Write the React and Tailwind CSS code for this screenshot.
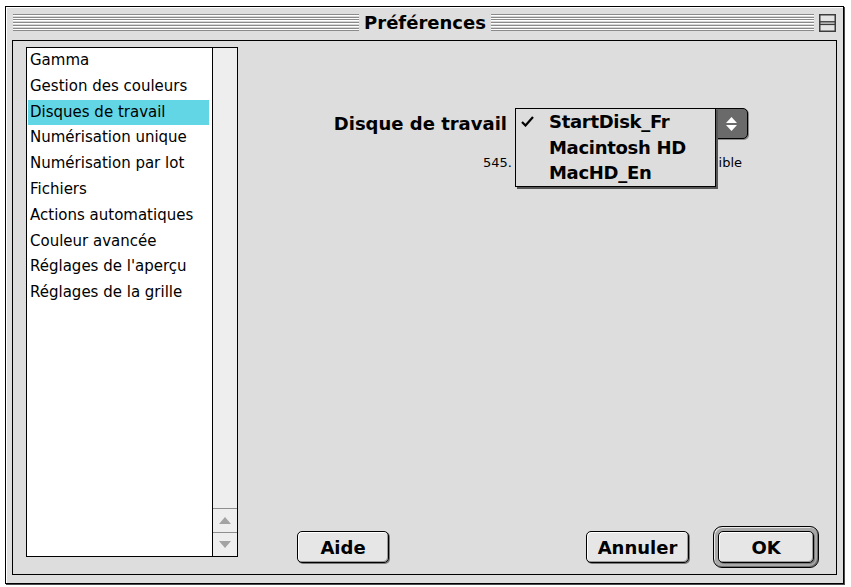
import React from 'react';

const items = [
    'Gamma',
    'Gestion des couleurs',
    'Disques de travail',
    'Numérisation unique',
    'Numérisation par lot',
    'Fichiers',
    'Actions automatiques',
    'Couleur avancée',
    "Réglages de l'aperçu",
    'Réglages de la grille',
];

const disks = ['StartDisk_Fr', 'Macintosh HD', 'MacHD_En'];

const stripes =
    'h-[17px] bg-[repeating-linear-gradient(180deg,#8a8a8a_0px,#8a8a8a_1px,#ffffff_1px,#ffffff_2px,#d6d6d6_2px,#d6d6d6_2.75px)]';

function PlatinumButton({ label, className = '' }) {
    return (
        <button
            type="button"
            className={`flex items-center justify-center rounded-[5px] border border-black bg-[#e6e6e6] text-[18px] font-bold text-black shadow-[inset_1px_1px_0_#ffffff,inset_-1px_-1px_0_#9a9a9a,1px_1px_0_#7a7a7a] ${className}`}
        >
            {label}
        </button>
    );
}

export default function App() {
    return (
        <div className="min-h-[587px] w-[851px] bg-white pl-[5px] pt-[6px] font-['DejaVu_Sans',sans-serif] text-black">
            <div className="flex h-[578px] w-[839px] flex-col border border-black bg-[#dedede] px-[6px] pb-[8px] shadow-[1px_1px_0_#4a4a4a,inset_1px_1px_0_#ffffff]">
                {/* title bar */}
                <div className="flex h-[33px] items-start pt-[7px]">
                    <div className={`ml-[1px] w-[346px] ${stripes}`} />
                    <div className="-mt-[2px] w-[132px] text-center text-[18px] font-bold leading-[22px]">Préférences</div>
                    <div className={`flex-1 ${stripes}`} />
                    <svg width="17" height="18" viewBox="0 0 17 18" className="ml-[5px] mr-[1px]">
                        <rect x="0.75" y="0.75" width="15.5" height="16.5" fill="#e4e4e4" stroke="#3c3c3c" strokeWidth="1.5" />
                        <line x1="1" y1="7.8" x2="16" y2="7.8" stroke="#3c3c3c" strokeWidth="1.4" />
                        <line x1="1" y1="10.4" x2="16" y2="10.4" stroke="#3c3c3c" strokeWidth="1.4" />
                    </svg>
                </div>

                {/* content */}
                <div className="flex flex-1 border border-black bg-[#dddddd] pl-[13px] pt-[6px]">
                    <div className="flex h-[510px] w-[212px] border border-black bg-white">
                        <div className="flex-1 pl-[1px] pr-[3px] text-[15px] leading-[25.8px]">
                            {items.map((item) => (
                                <div
                                    key={item}
                                    className={`h-[25.8px] whitespace-nowrap pl-[2px] ${item === 'Disques de travail' ? 'bg-[#63d6e6]' : ''}`}
                                >
                                    {item}
                                </div>
                            ))}
                        </div>
                        <div className="flex w-[25px] flex-col border-l border-black bg-[#eeeeee]">
                            <div className="flex-1" />
                            <div className="flex h-[24px] items-center justify-center border-t border-[#8f8f8f]">
                                <svg width="12" height="7" viewBox="0 0 12 7">
                                    <polygon points="6,0 12,7 0,7" fill="#a3a3a3" />
                                </svg>
                            </div>
                            <div className="flex h-[24px] items-center justify-center border-t border-[#8f8f8f]">
                                <svg width="12" height="7" viewBox="0 0 12 7">
                                    <polygon points="0,0 12,0 6,7" fill="#a3a3a3" />
                                </svg>
                            </div>
                        </div>
                    </div>

                    <div className="flex flex-1 flex-col pb-[6px]">
                        <div className="mt-[61px] flex items-center">
                            <div className="w-[269px] text-right text-[18px] font-bold">Disque de travail</div>
                            <div className="relative ml-[8px] h-[31px] w-[233px]">
                                <div className="absolute left-0 top-0 z-10 h-[79px] w-[201px] border border-black bg-[#dddddd] shadow-[2px_2px_0_#555555]">
                                    {disks.map((d, i) => (
                                        <div key={d} className="flex h-[25.5px] items-center text-[18px] font-bold tracking-[-0.3px]">
                                            <span className="flex w-[33px] pl-[5px]">
                                                {i === 0 && (
                                                    <svg width="13" height="11" viewBox="0 0 13 11">
                                                        <polyline points="1,6 4.5,9.5 12,1" fill="none" stroke="#000" strokeWidth="2.2" />
                                                    </svg>
                                                )}
                                            </span>
                                            <span>{d}</span>
                                        </div>
                                    ))}
                                </div>
                                <div className="absolute left-[200px] top-0 flex h-[31px] w-[33px] flex-col items-center justify-center gap-[2px] rounded-r-[5px] border border-black bg-[#6a6a6a] shadow-[1px_1px_0_#8a8a8a]">
                                    <svg width="11" height="6" viewBox="0 0 11 6">
                                        <polygon points="5.5,0 11,6 0,6" fill="#ffffff" />
                                    </svg>
                                    <svg width="11" height="6" viewBox="0 0 11 6">
                                        <polygon points="0,0 11,0 5.5,6" fill="#ffffff" />
                                    </svg>
                                </div>
                            </div>
                        </div>

                        {/* free-space line, mostly covered by the open menu */}
                        <div className="ml-[245px] mt-[16px] flex w-[259px] justify-between text-[13px] leading-[16px]">
                            <span>545.</span>
                            <span>ible</span>
                        </div>

                        <div className="mt-auto flex items-center">
                            <PlatinumButton label="Aide" className="ml-[59px] h-[32px] w-[92px]" />
                            <PlatinumButton label="Annuler" className="ml-[197px] h-[32px] w-[103px]" />
                            <div className="ml-[24px] flex h-[42px] w-[106px] items-center justify-center rounded-[9px] border border-black bg-[#a8a8a8] shadow-[inset_1px_1px_0_#e8e8e8,inset_-1px_-1px_0_#6e6e6e]">
                                <PlatinumButton label="OK" className="h-[32px] w-[96px]" />
                            </div>
                        </div>
                    </div>
                </div>
            </div>
        </div>
    );
}
